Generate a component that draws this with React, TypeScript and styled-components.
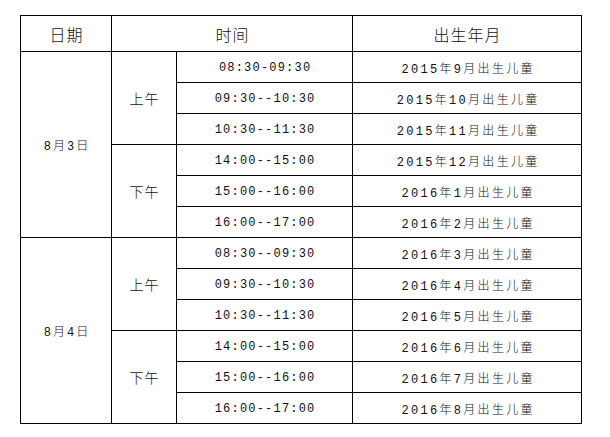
import React from 'react'
import styled, { createGlobalStyle } from 'styled-components'

const GlobalStyle = createGlobalStyle`
	html, body {
		margin: 0;
		padding: 0;
		background: #fff;
	}
	body {
		font-family: "Liberation Mono", "Noto Sans CJK SC", monospace;
		color: #000;
	}
`

interface Slot {
	time: string
	birth: string
}

interface Day {
	date: string
	morning: Slot[]
	afternoon: Slot[]
}

const days: Day[] = [
	{
		date: '8月3日',
		morning: [
			{ time: '08:30-09:30', birth: '2015年9月出生儿童' },
			{ time: '09:30--10:30', birth: '2015年10月出生儿童' },
			{ time: '10:30--11:30', birth: '2015年11月出生儿童' },
		],
		afternoon: [
			{ time: '14:00--15:00', birth: '2015年12月出生儿童' },
			{ time: '15:00--16:00', birth: '2016年1月出生儿童' },
			{ time: '16:00--17:00', birth: '2016年2月出生儿童' },
		],
	},
	{
		date: '8月4日',
		morning: [
			{ time: '08:30--09:30', birth: '2016年3月出生儿童' },
			{ time: '09:30--10:30', birth: '2016年4月出生儿童' },
			{ time: '10:30--11:30', birth: '2016年5月出生儿童' },
		],
		afternoon: [
			{ time: '14:00--15:00', birth: '2016年6月出生儿童' },
			{ time: '15:00--16:00', birth: '2016年7月出生儿童' },
			{ time: '16:00--17:00', birth: '2016年8月出生儿童' },
		],
	},
]

const Page = styled.div`
	padding: 15px 0 0 20px;
`

// black background shows through the 1px gaps as the rules
const Schedule = styled.div`
	display: grid;
	grid-template-columns: 90px 64px 175px 228px;
	grid-template-rows: 35px repeat(12, 30px);
	gap: 1px;
	padding: 1px;
	background: #000;
	width: fit-content;
`

const Cell = styled.div<{ $span?: number; $cols?: number; $spacing: number; $size: number }>`
	background: #fff;
	display: flex;
	align-items: center;
	justify-content: center;
	grid-row: span ${(p) => p.$span || 1};
	grid-column: span ${(p) => p.$cols || 1};
	font-size: ${(p) => p.$size}px;
	font-weight: 300;
	letter-spacing: ${(p) => p.$spacing}px;
	padding-left: ${(p) => p.$spacing}px;
	padding-top: 1px;
	white-space: nowrap;
	color: #111;
`

const HeadCell = styled(Cell)`
	font-family: "Noto Sans CJK SC", sans-serif;
	padding-top: 0;
`

const PeriodCell = styled(Cell)`
	font-family: "Noto Sans CJK SC", sans-serif;
	padding-top: 0;
`

const App: React.FC = () => {
	return (
		<Page>
			<GlobalStyle />
			<Schedule>
				<HeadCell $size={16} $spacing={1}>日期</HeadCell>
				<HeadCell $size={16} $spacing={1} $cols={2}>时间</HeadCell>
				<HeadCell $size={16} $spacing={1}>出生年月</HeadCell>
				{days.map((day) => (
					<React.Fragment key={day.date}>
						<Cell $size={12} $spacing={2} $span={6}>{day.date}</Cell>
						{[
							{ label: '上午', slots: day.morning },
							{ label: '下午', slots: day.afternoon },
						].map((period) => (
							<React.Fragment key={period.label}>
								<PeriodCell $size={14} $spacing={1} $span={3}>{period.label}</PeriodCell>
								{period.slots.map((slot) => (
									<React.Fragment key={slot.time}>
										<Cell $size={12} $spacing={1.2}>{slot.time}</Cell>
										<Cell $size={12} $spacing={2.3}>{slot.birth}</Cell>
									</React.Fragment>
								))}
							</React.Fragment>
						))}
					</React.Fragment>
				))}
			</Schedule>
		</Page>
	)
}

export default App
